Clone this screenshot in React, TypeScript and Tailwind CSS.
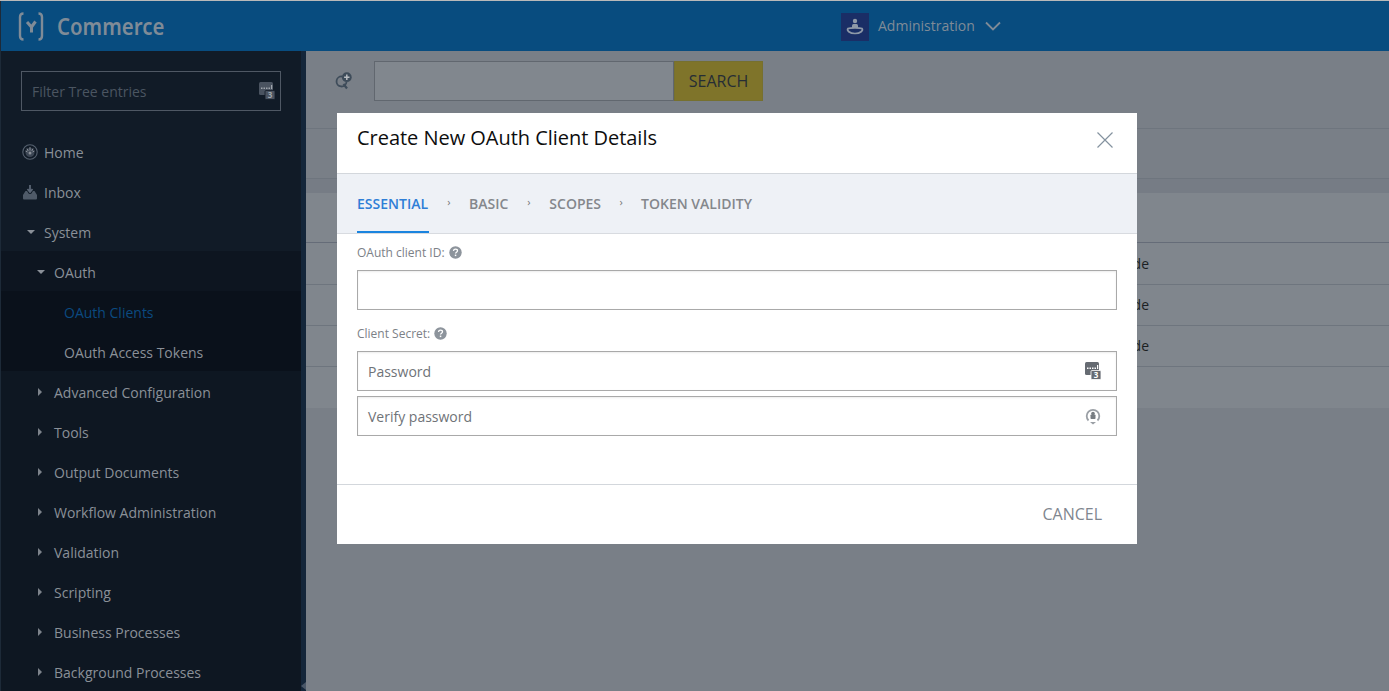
import React from "react";

const font = "font-['Open_Sans','Noto_Sans',sans-serif]";

function KeyIcon({ dark = false }: { dark?: boolean }) {
  const a = dark ? "#4a5360" : "#666b72";
  const bg = dark ? "#111b27" : "#ffffff";
  const fg = dark ? "#a0a6ad" : "#ffffff";
  return (
    <svg width="18" height="20" viewBox="0 0 18 20" className="shrink-0">
      <rect x="1" y="1" width="14" height="13" rx="1.5" fill={a} />
      <rect x="3" y="6.500" width="1.500" height="1.500" fill={fg} />
      <rect x="5.500" y="6.500" width="1.500" height="1.500" fill={fg} />
      <rect x="8" y="6.500" width="1.500" height="1.500" fill={fg} />
      <rect x="10.500" y="6.500" width="1.500" height="1.500" fill={fg} />
      <rect x="13" y="4" width="1.200" height="4" fill={fg} />
      <rect x="7" y="9.500" width="10" height="9" rx="1" fill={a} stroke={bg} strokeWidth="0.8" />
      <text x="12" y="17.200" fontSize="8" fontWeight="700" textAnchor="middle" fill={fg} fontFamily="Open Sans">3</text>
    </svg>
  );
}

function Tri({ open }: { open: boolean }) {
  return open ? (
    <svg width="10" height="6" viewBox="0 0 10 6"><path d="M1 1h8L5 5z" fill="#8a9098" /></svg>
  ) : (
    <svg width="6" height="10" viewBox="0 0 6 10"><path d="M1 1l4 4-4 4z" fill="#7d838b" /></svg>
  );
}

function Help() {
  return (
    <svg width="13" height="13" viewBox="0 0 13 13" className="ml-[4px] -mt-[2px]">
      <circle cx="6.5" cy="6.5" r="6.2" fill="#8d949c" />
      <path d="M4.500 5c.1-1.200 1-1.800 2-1.800 1.100 0 2 .7 2 1.600 0 1.400-2 1.400-2 2.800" fill="none" stroke="#fff" strokeWidth="1.300" />
      <rect x="5.800" y="8.600" width="1.500" height="1.500" fill="#fff" />
    </svg>
  );
}

const topRows: string[] = [
  "Advanced Configuration",
  "Tools",
  "Output Documents",
  "Workflow Administration",
  "Validation",
  "Scripting",
  "Business Processes",
  "Background Processes",
];

function Sidebar() {
  return (
    <aside className="w-[306px] shrink-0 flex border-l border-[#1d2a38] bg-[#111b27] overflow-hidden">
      <div className="w-[300px] shrink-0 flex flex-col">
        <div className="pt-[20px] pl-[20px] pr-[20px]">
          <div className="h-[40px] w-[260px] border border-[#4f5864] flex items-center justify-between pl-[10px] pr-[4px]">
            <span className="text-[14px] text-[#4b5561]">Filter Tree entries</span>
            <KeyIcon dark />
          </div>
        </div>
        <div className="mt-[20px] text-[14px] text-[#8a9098]">
          <div className="h-[40px] pt-[2px] flex items-center pl-[21px]">
            <svg width="16" height="16" viewBox="0 0 16 16" className="mr-[6px]">
              <circle cx="8" cy="8" r="7.200" fill="none" stroke="#56616f" strokeWidth="1.100" />
              <circle cx="8" cy="8.500" r="4.500" fill="#3c4654" />
              <path d="M8 3v3.500M5 4.500l1.200 2.500M11 4.500L9.800 7M3.500 7l2 1M12.500 7l-2 1" stroke="#8a9098" strokeWidth="1" />
              <circle cx="8" cy="9" r="1.500" fill="#8a9098" />
            </svg>
            Home
          </div>
          <div className="h-[40px] pt-[2px] flex items-center pl-[21px]">
            <svg width="16" height="16" viewBox="0 0 16 16" className="mr-[6px]">
              <path d="M8 1v6M5.500 5L8 8l2.500-3" fill="none" stroke="#5a6574" strokeWidth="1.800" />
              <path d="M3.500 7H5l2 3h2l2-3h1.500L15 11v3.500a1 1 0 0 1-1 1H2a1 1 0 0 1-1-1V11z" fill="#4f5a68" />
            </svg>
            Inbox
          </div>
          <div className="h-[40px] pt-[2px] flex items-center pl-[25px]">
            <span className="w-[18px] flex"><Tri open /></span>
            System
          </div>
          <div className="bg-[#0d1520]">
            <div className="h-[40px] pt-[2px] flex items-center pl-[35px]">
              <span className="w-[18px] flex"><Tri open /></span>
              OAuth
            </div>
            <div className="bg-[#0a111b]">
              <div className="h-[40px] pt-[2px] flex items-center pl-[63px] text-[#0b4a80]">OAuth Clients</div>
              <div className="h-[40px] pt-[2px] flex items-center pl-[63px]">OAuth Access Tokens</div>
            </div>
          </div>
          {topRows.map((label) => (
            <div key={label} className="h-[40px] pt-[2px] flex items-center pl-[36px] bg-[#0e1722]">
              <span className="w-[17px] flex"><Tri open={false} /></span>
              {label}
            </div>
          ))}
        </div>
      </div>
      <div className="flex-1 bg-[#14263a] flex items-end justify-center pb-[1px]">
        <svg width="5" height="8" viewBox="0 0 5 8"><path d="M5 0v8L0 4z" fill="#4a5768" /></svg>
      </div>
    </aside>
  );
}

function TableRow() {
  return (
    <div className="h-[41px] pb-[2px] border-b border-[#6e757e] flex items-center">
      <span className="w-[843px] text-right text-[14px] text-[#1c1f23]">Authorization Code</span>
    </div>
  );
}

function Content() {
  return (
    <main className="flex-1 min-w-0 bg-[#797f87] flex flex-col">
      <div className="h-[77px] flex items-start pt-[10px] shrink-0">
        <div className="w-[68px] h-[40px] flex items-center pl-[29px]">
          <svg width="17" height="18" viewBox="0 0 17 18">
            <path d="M7 4.500A5 5 0 1 0 11.500 10" fill="none" stroke="#3e4c5a" strokeWidth="1.800" />
            <path d="M8.500 12l3.500 4.500" stroke="#3e4c5a" strokeWidth="2.200" />
            <circle cx="11.800" cy="5.200" r="4.900" fill="#3e4c5a" />
            <path d="M11.800 2.500v5.400M9.100 5.200h5.400" stroke="#b9bdc2" strokeWidth="1.500" />
          </svg>
        </div>
        <div className="w-[300px] h-[40px] bg-[#81878e] border border-[#61676f]" />
        <div className="w-[89px] h-[40px] bg-[#7f742a] border border-[#76702f] flex items-center justify-center text-[16px] text-[#262d35]">
          SEARCH
        </div>
      </div>
      <div className="h-[50px] shrink-0 border-t border-[#6e757e]" />
      <div className="h-[15px] shrink-0 border-t border-[#6e757e] bg-[#767c85]" />
      <div className="h-[215px] shrink-0 bg-[#80868d]">
        <div className="h-[50px] border-b border-[#656c78]" />
        <div className="h-px" />
        <TableRow />
        <TableRow />
        <TableRow />
      </div>
    </main>
  );
}

function Modal() {
  return (
    <div className={`absolute left-[337px] top-[113px] w-[800px] h-[431px] bg-white flex flex-col ${font}`}>
      <div className="h-[61px] shrink-0 flex items-start justify-between pl-[20px] pr-[23px] border-b border-[#d3d7dc]">
        <span className="text-[20px] leading-[28px] pt-[11px] text-[#0d0d0d] tracking-[-0.03px]">Create New OAuth Client Details</span>
        <svg width="18" height="18" viewBox="0 0 18 18" className="mt-[18px]">
          <path d="M1.500 1.500l15 15M16.500 1.500l-15 15" stroke="#84929f" strokeWidth="1.200" />
        </svg>
      </div>
      <div className="h-[60px] shrink-0 bg-[#eef1f6] border-b border-[#d8dbe0] flex items-stretch pl-[20px] text-[14px] font-semibold text-[#84878c]">
        <div className="w-[72px] pt-[2px] border-b-2 border-[#1a84df] text-[#2e7ed6] flex items-center">ESSENTIAL</div>
        <span className="w-[40px] flex items-center justify-center text-[11px] font-normal text-[#777] -mt-[2px]">›</span>
        <div className="flex items-center">BASIC</div>
        <span className="w-[41px] flex items-center justify-center text-[11px] font-normal text-[#777] -mt-[2px]">›</span>
        <div className="flex items-center">SCOPES</div>
        <span className="w-[40px] flex items-center justify-center text-[11px] font-normal text-[#777] -mt-[2px]">›</span>
        <div className="flex items-center">TOKEN VALIDITY</div>
      </div>
      <div className="flex-1 px-[20px] pt-[10px]">
        <div className="flex items-center h-[18px] text-[12px] text-[#7c8187]">OAuth client ID:<Help /></div>
        <div className="mt-[8px] h-[40px] border border-[#a9a9a9] shadow-[inset_0_1px_2px_rgba(0,0,0,0.08)]" />
        <div className="mt-[15px] flex items-center h-[18px] text-[12px] text-[#7c8187]">Client Secret:<Help /></div>
        <div className="mt-[8px] h-[40px] border border-[#a9a9a9] shadow-[inset_0_1px_2px_rgba(0,0,0,0.08)] flex items-center justify-between pl-[10px] pr-[14px] text-[14px] text-[#6f7378]">
          Password
          <KeyIcon />
        </div>
        <div className="mt-[5px] h-[40px] border border-[#a9a9a9] shadow-[inset_0_1px_2px_rgba(0,0,0,0.08)] flex items-center justify-between pl-[10px] pr-[15px] text-[14px] text-[#6f7378]">
          Verify password
          <svg width="16" height="18" viewBox="0 0 16 18">
            <path d="M3.500 13.500A6.300 6.300 0 1 1 12.500 13.500" fill="none" stroke="#9a9fa5" strokeWidth="1.800" />
            <path d="M8 17.500l-3-2.500h6z" fill="#9a9fa5" />
            <circle cx="8" cy="6.500" r="1.800" fill="#777c82" />
            <rect x="5.500" y="7.500" width="5" height="4.500" rx="0.800" fill="#777c82" />
          </svg>
        </div>
      </div>
      <div className="h-[60px] pb-[2px] shrink-0 border-t border-[#d3d7dc] flex items-center justify-end pr-[35px] text-[16px] text-[#80868f]">
        CANCEL
      </div>
    </div>
  );
}

export default function App() {
  return (
    <div className={`relative w-[1389px] h-[691px] overflow-hidden flex flex-col ${font}`}>
      <div className="h-px shrink-0 bg-[#b9b9b9]" />
      <header className="h-[50px] shrink-0 bg-[#084c7f] border-l border-[#1d2a38] flex items-center">
        <div className="w-[840px] shrink-0 flex items-center pl-[17px]">
          <svg width="27" height="29" viewBox="0 0 27 29" className="mr-[12px]">
            <path d="M5.500 1.500C3 1.500 2 3 2 5v19c0 2 1 3.500 3.500 3.500M20.500 1.500C23 1.500 24 3 24 5v19c0 2-1 3.500-3.500 3.500" fill="none" stroke="#7f8b97" strokeWidth="2.400" />
            <path d="M9 10l4.500 5L17.500 9.500M13.500 14.500l0 6" fill="none" stroke="#7f8b97" strokeWidth="3" />
          </svg>
          <span className="text-[24px] leading-none font-semibold text-[#7f8b97] font-['Noto_Sans',sans-serif] scale-x-[0.85] origin-left">Commerce</span>
        </div>
        <div className="w-[28px] h-[28px] mt-[2px] bg-[#1a2e66] flex items-center justify-center">
          <svg width="20" height="20" viewBox="0 0 20 20">
            <circle cx="10" cy="4" r="2.200" fill="#8e99a8" />
            <path d="M7 11V8.500A1.500 1.500 0 0 1 8.500 7h3A1.500 1.500 0 0 1 13 8.500V11z" fill="#8e99a8" />
            <path d="M3 11.500c2-.8 12-.8 14 0 1.500 2-1.500 5-7 5s-8.500-3-7-5z" fill="none" stroke="#8e99a8" strokeWidth="1.700" />
          </svg>
        </div>
        <span className="ml-[9px] -mt-[2px] text-[14px] text-[#7f8b97]">Administration</span>
        <svg width="16" height="10" viewBox="0 0 16 10" className="ml-[10px]">
          <path d="M1 1.500l7 7 7-7" fill="none" stroke="#7f8b97" strokeWidth="1.800" />
        </svg>
      </header>
      <div className="flex-1 flex min-h-0">
        <Sidebar />
        <Content />
      </div>
      <Modal />
    </div>
  );
}
